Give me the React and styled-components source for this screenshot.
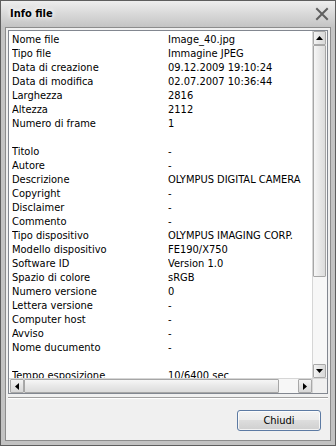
import React from "react";
import styled, { createGlobalStyle } from "styled-components";

const Global = createGlobalStyle`
  html, body { margin: 0; padding: 0; background: #ffffff; }
  * { box-sizing: border-box; }
`;

const FONT = `"DejaVu Sans Condensed", "DejaVu Sans", "Liberation Sans", sans-serif`;

const Window = styled.div`
  width: 336px;
  height: 446px;
  border: 1px solid #5e5e5e;
  background: linear-gradient(#eeeeee 0, #dadada 12px, #c4c4c4 26px, #c2c2c2 100%);
  display: flex;
  flex-direction: column;
  padding: 0 4px 4px 4px;
  font-family: ${FONT};
  font-stretch: condensed;
  font-size: 11px;
  color: #000;
`;

const TitleBar = styled.div`
  height: 26px;
  flex: none;
  display: flex;
  align-items: center;
  justify-content: space-between;
  padding: 0 2px 1px 5px;
`;

const Title = styled.div`
  font-weight: bold;
  font-size: 11px;
  text-shadow: 0 0 4px #ffffff, 0 0 6px #ffffff;
`;

const CloseIcon = styled.svg`
  width: 14px;
  height: 14px;
  display: block;
`;

const Client = styled.div`
  flex: 1;
  background: #f0f0f0;
  border: 1px solid #8c8c8c;
  display: flex;
  flex-direction: column;
  padding: 2px 2px 0 2px;
`;

const ListBox = styled.div`
  height: 364px;
  flex: none;
  border: 1px solid #828790;
  background: #ffffff;
  display: grid;
  grid-template-columns: minmax(0, 1fr) 15px;
  grid-template-rows: minmax(0, 1fr) 15px;
  overflow: hidden;
`;

const Content = styled.div`
  overflow: hidden;
  padding: 2px 0 0 3px;
`;

const Row = styled.div`
  display: grid;
  grid-template-columns: 156px 1fr;
  height: 14px;
  line-height: 14px;
  white-space: nowrap;
`;

const Cell = styled.span`
  overflow: hidden;
`;

const VScroll = styled.div`
  display: flex;
  flex-direction: column;
  background: #f7f7f7;
  border-left: 1px solid #d6d6d6;
  padding: 0 1px 0 0;
`;

const HScroll = styled.div`
  display: flex;
  flex-direction: row;
  background: #f7f7f7;
  border-top: 1px solid #d6d6d6;
  padding: 0 0 0 1px;
`;

const ArrowBtn = styled.div`
  flex: none;
  width: ${(p) => (p.$h ? "14px" : "100%")};
  height: ${(p) => (p.$h ? "100%" : "14px")};
  border: 1px solid #a9a9a9;
  border-radius: 1px;
  background: ${(p) =>
    p.$h
      ? "linear-gradient(#f4f4f4, #e4e4e4 50%, #d8d8d8)"
      : "linear-gradient(90deg, #f4f4f4, #e4e4e4 50%, #d8d8d8)"};
  display: flex;
  align-items: center;
  justify-content: center;
`;

const Thumb = styled.div`
  flex: none;
  border: 1px solid #a6a6a6;
  border-radius: 1px;
  background: ${(p) =>
    p.$h
      ? "linear-gradient(#f6f6f6, #e8e8e8 50%, #dcdcdc)"
      : "linear-gradient(90deg, #f6f6f6, #e8e8e8 50%, #dcdcdc)"};
`;

const Track = styled.div`
  flex: 1;
`;

const Corner = styled.div`
  background: #f0f0f0;
  border-top: 1px solid #d6d6d6;
  border-left: 1px solid #d6d6d6;
`;

const Separator = styled.div`
  margin-top: 3px;
  height: 2px;
  border-top: 1px solid #a0a0a0;
  border-bottom: 1px solid #ffffff;
  flex: none;
`;

const Footer = styled.div`
  display: flex;
  justify-content: flex-end;
  padding: 11px 7px 0 0;
`;

const Button = styled.button`
  width: 84px;
  height: 21px;
  border: 1px solid #5c7aa3;
  border-radius: 3px;
  background: linear-gradient(#f3f3f3, #ececec 45%, #dddddd 50%, #cfcfcf);
  box-shadow: inset 0 0 0 1px rgba(255, 255, 255, 0.75);
  font-family: ${FONT};
  font-stretch: condensed;
  font-size: 11px;
  color: #000;
  padding: 0;
`;

const Arrow = ({ dir }) => {
  const pts = {
    up: "0,4 3.5,0 7,4",
    down: "0,0 7,0 3.5,4",
    left: "4,0 4,7 0,3.5",
    right: "0,0 4,3.5 0,7",
  }[dir];
  const vertical = dir === "up" || dir === "down";
  return (
    <svg width={vertical ? 7 : 4} height={vertical ? 4 : 7} viewBox={vertical ? "0 0 7 4" : "0 0 4 7"}>
      <polygon points={pts} fill="#000" />
    </svg>
  );
};

const rows = [
  ["Nome file", "Image_40.jpg"],
  ["Tipo file", "Immagine JPEG"],
  ["Data di creazione", "09.12.2009 19:10:24"],
  ["Data di modifica", "02.07.2007 10:36:44"],
  ["Larghezza", "2816"],
  ["Altezza", "2112"],
  ["Numero di frame", "1"],
  ["", ""],
  ["Titolo", "-"],
  ["Autore", "-"],
  ["Descrizione", "OLYMPUS DIGITAL CAMERA"],
  ["Copyright", "-"],
  ["Disclaimer", "-"],
  ["Commento", "-"],
  ["Tipo dispositivo", "OLYMPUS IMAGING CORP."],
  ["Modello dispositivo", "FE190/X750"],
  ["Software ID", "Version 1.0"],
  ["Spazio di colore", "sRGB"],
  ["Numero versione", "0"],
  ["Lettera versione", "-"],
  ["Computer host", "-"],
  ["Avviso", "-"],
  ["Nome ducumento", "-"],
  ["", ""],
  ["Tempo esposizione", "10/6400 sec"],
];

export default function App() {
  return (
    <>
      <Global />
      <Window>
        <TitleBar>
          <Title>Info file</Title>
          <CloseIcon viewBox="0 0 14 14">
            <path d="M2 2 L12 12 M12 2 L2 12" stroke="#5f5f5f" strokeWidth="2" strokeLinecap="square" />
          </CloseIcon>
        </TitleBar>
        <Client>
          <ListBox>
            <Content>
              {rows.map(([k, v], i) => (
                <Row key={i}>
                  <Cell>{k}</Cell>
                  <Cell>{v}</Cell>
                </Row>
              ))}
            </Content>
            <VScroll>
              <ArrowBtn>
                <Arrow dir="up" />
              </ArrowBtn>
              <Thumb style={{ height: 232 }} />
              <Track />
              <ArrowBtn>
                <Arrow dir="down" />
              </ArrowBtn>
            </VScroll>
            <HScroll>
              <ArrowBtn $h>
                <Arrow dir="left" />
              </ArrowBtn>
              <Thumb $h style={{ width: 255 }} />
              <Track />
              <ArrowBtn $h>
                <Arrow dir="right" />
              </ArrowBtn>
            </HScroll>
            <Corner />
          </ListBox>
          <Separator />
          <Footer>
            <Button>Chiudi</Button>
          </Footer>
        </Client>
      </Window>
    </>
  );
}
